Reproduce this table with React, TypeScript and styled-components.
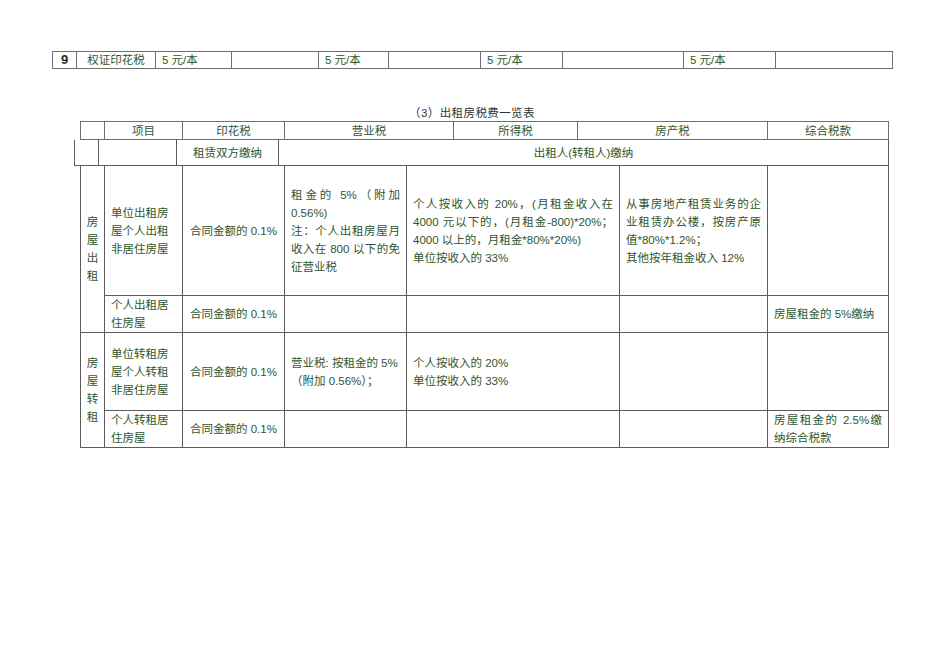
import styled, { createGlobalStyle } from 'styled-components';

const GlobalStyle = createGlobalStyle`
    body {
        margin: 0;
        background: #fff;
    }
`;

const Page = styled.div`
    padding: 51px 0 0 52px;
    width: 840px;
    font-family: 'Liberation Sans', 'Noto Sans CJK SC', sans-serif;
    font-size: 11.5px;
    color: #2f5530;
`;

const Grid = styled.table<{ $width: number; $indent: number; $noTop?: boolean }>`
    border-collapse: collapse;
    table-layout: fixed;
    width: ${(p) => p.$width}px;
    margin-left: ${(p) => p.$indent}px;
    ${(p) => (p.$noTop ? 'border-top: hidden;' : '')}
`;

const Cell = styled.td<{ $h?: number; $align?: 'left' | 'center' }>`
    border: 1px solid #5b5b5b;
    padding: 0 6px;
    height: ${(p) => p.$h ?? 16}px;
    line-height: 18px;
    text-align: ${(p) => p.$align ?? 'center'};
    vertical-align: middle;
    white-space: nowrap;
    overflow: hidden;
`;

const SmallRowCell = styled(Cell)`
    line-height: 16px;
    border-color: #6e6e6e;
`;

const Number = styled.span`
    font-weight: 700;
    font-size: 13px;
    color: #173017;
`;

const Title = styled.div`
    margin: 36px 0 0;
    height: 16px;
    line-height: 16px;
    text-align: center;
    color: #333;
    letter-spacing: 0.4px;
`;

const Line = styled.div<{ $justify?: boolean }>`
    text-align: ${(p) => (p.$justify ? 'justify' : 'left')};
    text-align-last: ${(p) => (p.$justify ? 'justify' : 'left')};
`;

const Stack = styled.div`
    display: flex;
    flex-direction: column;
    align-items: center;
    line-height: 18px;
`;

const VerticalLabel = ({ text }: { text: string }) => (
    <Stack>
        {text.split('').map((c, i) => (
            <span key={i}>{c}</span>
        ))}
    </Stack>
);

const Lines = ({ lines }: { lines: [string, boolean?][] }) => (
    <>
        {lines.map(([t, j], i) => (
            <Line key={i} $justify={j}>
                {t}
            </Line>
        ))}
    </>
);

const topCols = [24, 79, 76, 87, 70, 92, 82, 121, 92, 117];
const headCols = [24, 78, 102, 169, 124, 190, 121];
const payCols = [24, 78, 102, 610];
const bodyCols = [24, 78, 102, 122, 213, 148, 121];

const Cols = ({ widths }: { widths: number[] }) => (
    <colgroup>
        {widths.map((w, i) => (
            <col key={i} style={{ width: w }} />
        ))}
    </colgroup>
);

const App = () => {
    return (
        <Page>
            <GlobalStyle />
            <Grid $width={840} $indent={0}>
                <Cols widths={topCols} />
                <tbody>
                    <tr>
                        <SmallRowCell>
                            <Number>9</Number>
                        </SmallRowCell>
                        <SmallRowCell>权证印花税</SmallRowCell>
                        <SmallRowCell $align="left">5 元/本</SmallRowCell>
                        <SmallRowCell />
                        <SmallRowCell $align="left">5 元/本</SmallRowCell>
                        <SmallRowCell />
                        <SmallRowCell $align="left">5 元/本</SmallRowCell>
                        <SmallRowCell />
                        <SmallRowCell $align="left">5 元/本</SmallRowCell>
                        <SmallRowCell />
                    </tr>
                </tbody>
            </Grid>

            <Title>（3）出租房税费一览表</Title>

            <Grid $width={808} $indent={28}>
                <Cols widths={headCols} />
                <tbody>
                    <tr>
                        <SmallRowCell $h={17} />
                        <SmallRowCell $h={17}>项目</SmallRowCell>
                        <SmallRowCell $h={17}>印花税</SmallRowCell>
                        <SmallRowCell $h={17}>营业税</SmallRowCell>
                        <SmallRowCell $h={17}>所得税</SmallRowCell>
                        <SmallRowCell $h={17}>房产税</SmallRowCell>
                        <SmallRowCell $h={17}>综合税款</SmallRowCell>
                    </tr>
                </tbody>
            </Grid>

            <Grid $width={814} $indent={22} $noTop>
                <Cols widths={payCols} />
                <tbody>
                    <tr>
                        <Cell $h={25} />
                        <Cell $h={25} />
                        <Cell $h={25}>租赁双方缴纳</Cell>
                        <Cell $h={25}>出租人(转租人)缴纳</Cell>
                    </tr>
                </tbody>
            </Grid>

            <Grid $width={808} $indent={28} $noTop>
                <Cols widths={bodyCols} />
                <tbody>
                    <tr>
                        <Cell rowSpan={2} $h={129}>
                            <VerticalLabel text="房屋出租" />
                        </Cell>
                        <Cell $h={129}>
                            <Lines lines={[['单位出租房'], ['屋个人出租'], ['非居住房屋']]} />
                        </Cell>
                        <Cell $h={129}>合同金额的 0.1%</Cell>
                        <Cell $h={129} $align="left">
                            <Lines
                                lines={[
                                    ['租金的 5%（附加', true],
                                    ['0.56%)'],
                                    ['注：个人出租房屋月', true],
                                    ['收入在 800 以下的免', true],
                                    ['征营业税'],
                                ]}
                            />
                        </Cell>
                        <Cell $h={129} $align="left">
                            <Lines
                                lines={[
                                    ['个人按收入的 20%，(月租金收入在', true],
                                    ['4000 元以下的，(月租金-800)*20%；', true],
                                    ['4000 以上的，月租金*80%*20%)'],
                                    ['单位按收入的 33%'],
                                ]}
                            />
                        </Cell>
                        <Cell $h={129} $align="left">
                            <Lines
                                lines={[
                                    ['从事房地产租赁业务的企', true],
                                    ['业租赁办公楼，按房产原', true],
                                    ['值*80%*1.2%；'],
                                    ['其他按年租金收入 12%'],
                                ]}
                            />
                        </Cell>
                        <Cell $h={129} />
                    </tr>
                    <tr>
                        <Cell $h={36}>
                            <Lines lines={[['个人出租居'], ['住房屋']]} />
                        </Cell>
                        <Cell $h={36}>合同金额的 0.1%</Cell>
                        <Cell $h={36} />
                        <Cell $h={36} />
                        <Cell $h={36} />
                        <Cell $h={36} $align="left">
                            房屋租金的 5%缴纳
                        </Cell>
                    </tr>
                    <tr>
                        <Cell rowSpan={2} $h={77}>
                            <VerticalLabel text="房屋转租" />
                        </Cell>
                        <Cell $h={77}>
                            <Lines lines={[['单位转租房'], ['屋个人转租'], ['非居住房屋']]} />
                        </Cell>
                        <Cell $h={77}>合同金额的 0.1%</Cell>
                        <Cell $h={77} $align="left">
                            <Lines lines={[['营业税: 按租金的 5%'], ['（附加 0.56%）；']]} />
                        </Cell>
                        <Cell $h={77} $align="left">
                            <Lines lines={[['个人按收入的 20%'], ['单位按收入的 33%']]} />
                        </Cell>
                        <Cell $h={77} />
                        <Cell $h={77} />
                    </tr>
                    <tr>
                        <Cell $h={36}>
                            <Lines lines={[['个人转租居'], ['住房屋']]} />
                        </Cell>
                        <Cell $h={36}>合同金额的 0.1%</Cell>
                        <Cell $h={36} />
                        <Cell $h={36} />
                        <Cell $h={36} />
                        <Cell $h={36} $align="left">
                            <Lines lines={[['房屋租金的 2.5%缴', true], ['纳综合税款']]} />
                        </Cell>
                    </tr>
                </tbody>
            </Grid>
        </Page>
    );
};

export default App;
